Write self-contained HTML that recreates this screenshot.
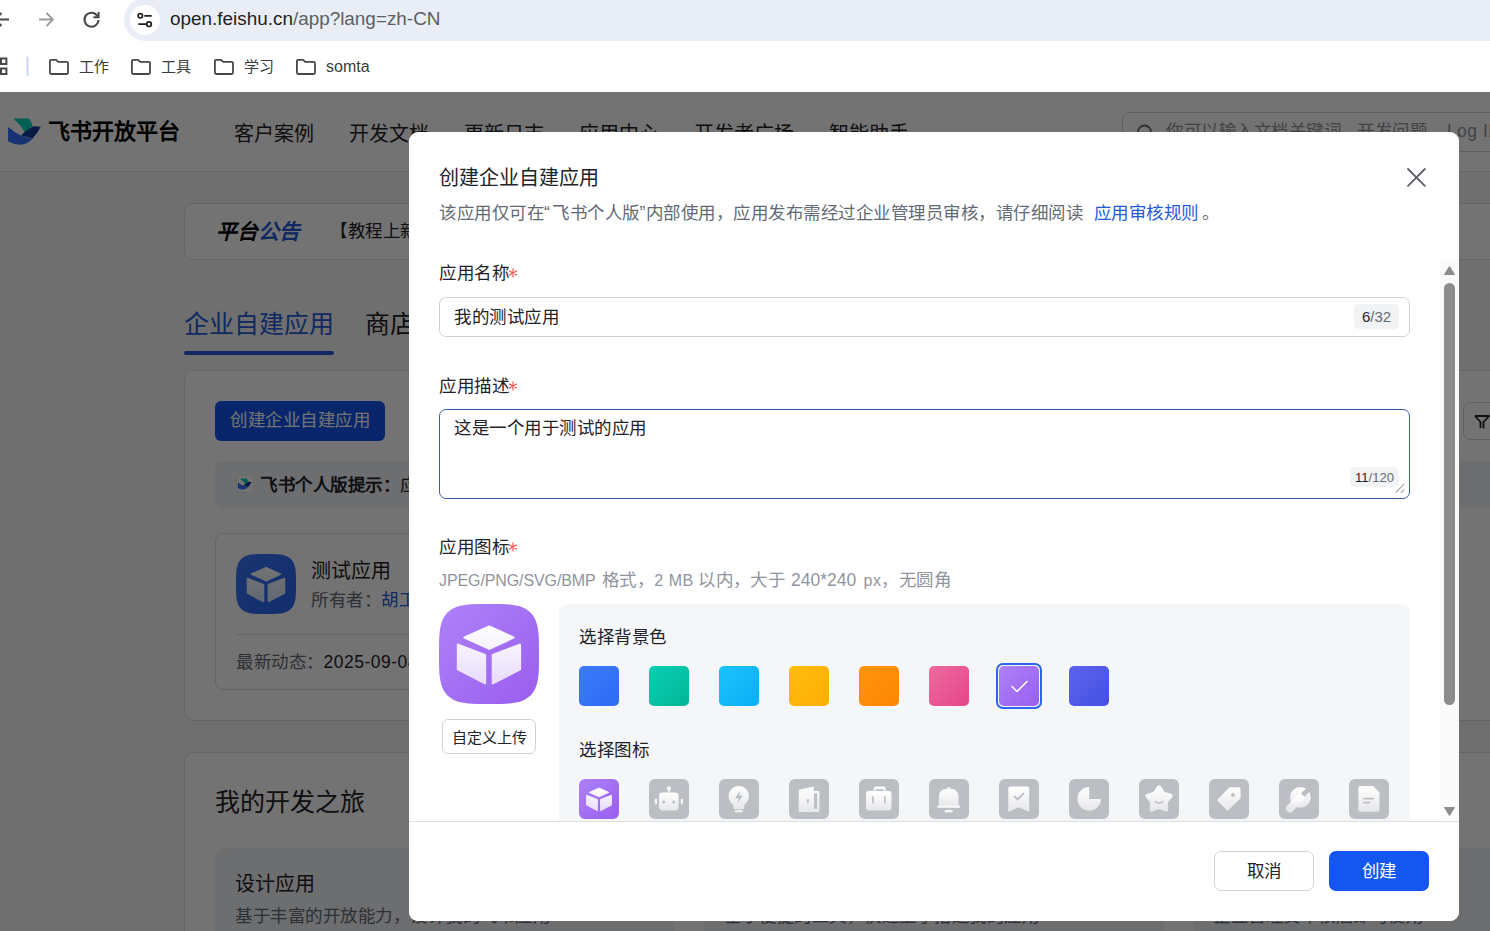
<!DOCTYPE html>
<html lang="zh-CN">
<head>
<meta charset="utf-8">
<style>
*{box-sizing:border-box;margin:0;padding:0}
html,body{width:1490px;height:931px;overflow:hidden;background:#fff}
body{position:relative;font-family:"Liberation Sans",sans-serif;color:#1f2329;font-weight:300}
.a{position:absolute}
.t{position:absolute;white-space:nowrap;line-height:1}
#chrome{position:absolute;left:0;top:0;width:1490px;height:92px;background:#fff}
#pill{position:absolute;left:124px;top:-2px;width:1400px;height:43px;border-radius:21.5px;background:#e9eef6}
#site{position:absolute;left:130px;top:5px;width:30px;height:30px;border-radius:50%;background:#fff}
#page{position:absolute;left:0;top:92px;width:1490px;height:839px;background:#f5f6f7;overflow:hidden}
#nav{position:absolute;left:0;top:0;width:1490px;height:80px;background:#fff;border-bottom:1px solid #dee0e3}
.card{position:absolute;background:#fff;border:1px solid #dee0e3;border-radius:10px}
#mask{position:absolute;left:0;top:92px;width:1490px;height:839px;background:rgba(0,0,0,.55)}
#modal{position:absolute;left:409px;top:132px;width:1050px;height:789px;background:#fff;border-radius:9px;overflow:hidden}
.lbl{font-size:17.5px;letter-spacing:.5px;color:#1f2329}
.f17{font-size:17.5px;letter-spacing:.5px}
.q{letter-spacing:2.2px}
.req{color:#f54a45}
.inp{position:absolute;left:30px;width:971px;border:1px solid #d0d3d6;border-radius:7px;background:#fff}
.cnt{position:absolute;background:#f2f3f5;border-radius:5px;color:#646a73;line-height:1;white-space:nowrap;text-align:center}
.cnt b{font-weight:normal;color:#1f2329}
.sw{position:absolute;top:534px;width:40px;height:40px;border-radius:5px}
.ic{position:absolute;top:647px;width:40px;height:40px;border-radius:6px;background:#bbbfc4}
.ic svg{position:absolute;left:0;top:0}
.btn{position:absolute;top:719px;width:100px;height:40px;border-radius:7px;font-size:17.5px;letter-spacing:.5px;line-height:38px;text-align:center}
</style>
</head>
<body>
<svg width="0" height="0" style="position:absolute"><defs>
<linearGradient id="wg" x1="0" y1="0" x2="0" y2="1"><stop offset="0" stop-color="#fff"/><stop offset="1" stop-color="#e6e7ea"/></linearGradient>
<linearGradient id="wgp" x1="0" y1="0" x2="0" y2="1" gradientUnits="userSpaceOnUse" gradientTransform="scale(100)"><stop offset="0.2" stop-color="#fff"/><stop offset="0.85" stop-color="#e6d9fb"/></linearGradient>
<linearGradient id="wgb" x1="0" y1="0" x2="0" y2="1" gradientUnits="userSpaceOnUse" gradientTransform="scale(100)"><stop offset="0.2" stop-color="#fff"/><stop offset="0.85" stop-color="#d9e5fd"/></linearGradient>
<linearGradient id="pg" x1="0" y1="0" x2="1" y2="1"><stop offset="0" stop-color="#ad82f8"/><stop offset="1" stop-color="#9a5def"/></linearGradient>
<linearGradient id="bg2" x1="0" y1="0" x2="1" y2="1"><stop offset="0" stop-color="#3a78fb"/><stop offset="1" stop-color="#2a64f0"/></linearGradient>
</defs></svg>
<div id="chrome">
  <div id="pill"></div>
  <div id="site"></div>
  <svg class="a" style="left:0;top:0" width="120" height="92" viewBox="0 0 120 92">
    <path d="M9 19.5H-5M1.5 13L-5 19.5L1.5 26" fill="none" stroke="#474747" stroke-width="2"/>
    <path d="M39 19.5H53M46.5 13L53 19.5L46.5 26" fill="none" stroke="#9c9c9c" stroke-width="1.8"/>
    <path d="M97.6 16.2A7 7 0 1 0 98.5 20" fill="none" stroke="#474747" stroke-width="2"/>
    <path d="M98.6 12V17.2H93.4" fill="none" stroke="#474747" stroke-width="2"/>
    <rect x="1" y="58.5" width="5.4" height="5.5" fill="none" stroke="#474747" stroke-width="2"/>
    <rect x="1" y="68.5" width="5.4" height="5.5" fill="none" stroke="#474747" stroke-width="2"/>
    <rect x="26.5" y="56.5" width="2" height="19.5" rx="1" fill="#c9d9f7"/>
  </svg>
  <svg class="a" style="left:130px;top:5px" width="30" height="30" viewBox="0 0 30 30">
    <circle cx="10.3" cy="10.8" r="2.2" fill="none" stroke="#1f1f1f" stroke-width="1.7"/>
    <path d="M14.3 10.8H21.7M8.3 19.2H16.3" stroke="#1f1f1f" stroke-width="1.7"/>
    <circle cx="19" cy="19.2" r="2.3" fill="none" stroke="#1f1f1f" stroke-width="1.7"/>
  </svg>
  <svg class="a" style="left:48px;top:58px" width="22" height="18" viewBox="0 0 22 18"><path d="M1.9 3.2Q1.9 1.8 3.3 1.8H8.2L10.2 3.8H18.6Q20 3.8 20 5.2V14.6Q20 16 18.6 16H3.3Q1.9 16 1.9 14.6Z" fill="none" stroke="#474747" stroke-width="1.8" stroke-linejoin="round"/></svg>
  <svg class="a" style="left:130px;top:58px" width="22" height="18" viewBox="0 0 22 18"><path d="M1.9 3.2Q1.9 1.8 3.3 1.8H8.2L10.2 3.8H18.6Q20 3.8 20 5.2V14.6Q20 16 18.6 16H3.3Q1.9 16 1.9 14.6Z" fill="none" stroke="#474747" stroke-width="1.8" stroke-linejoin="round"/></svg>
  <svg class="a" style="left:213px;top:58px" width="22" height="18" viewBox="0 0 22 18"><path d="M1.9 3.2Q1.9 1.8 3.3 1.8H8.2L10.2 3.8H18.6Q20 3.8 20 5.2V14.6Q20 16 18.6 16H3.3Q1.9 16 1.9 14.6Z" fill="none" stroke="#474747" stroke-width="1.8" stroke-linejoin="round"/></svg>
  <svg class="a" style="left:295px;top:58px" width="22" height="18" viewBox="0 0 22 18"><path d="M1.9 3.2Q1.9 1.8 3.3 1.8H8.2L10.2 3.8H18.6Q20 3.8 20 5.2V14.6Q20 16 18.6 16H3.3Q1.9 16 1.9 14.6Z" fill="none" stroke="#474747" stroke-width="1.8" stroke-linejoin="round"/></svg>
  <div class="t" style="left:170px;top:10px;font-size:18.9px;color:#1f1f1f">open.feishu.cn<span style="color:#5b5e63">/app?lang=zh-CN</span></div>
  <div class="t" style="left:79px;top:59px;font-size:15px;color:#3c3c3c">工作</div>
  <div class="t" style="left:161px;top:59px;font-size:15px;color:#3c3c3c">工具</div>
  <div class="t" style="left:244px;top:59px;font-size:15px;color:#3c3c3c">学习</div>
  <div class="t" style="left:326px;top:58.5px;font-size:16px;color:#3c3c3c">somta</div>
</div>

<div id="page">
  <div id="nav">
    <svg class="a" style="left:0;top:0" width="50" height="80" viewBox="0 92 50 80"><path d="M13.4 118.5L28.9 118.5Q31 121 32.6 125.9L24.8 132Q20 124 13.4 118.5Z" fill="#00d6b9"/><path d="M8.1 127.1Q15 133 21.1 135.7Q27 138 32.6 138.5Q27 145 19.5 144.7Q13 144 8.1 141.4Z" fill="#3370ff"/><path d="M21.1 135.7Q27 129 33.8 126.3Q37 125.8 40.7 127.1Q37 134 32.6 138.5Q27 137 21.1 135.7Z" fill="#133c9a"/></svg>
    <svg class="a" style="left:1130px;top:26px" width="30" height="30" viewBox="0 0 30 30"><circle cx="14.5" cy="14" r="6.5" fill="none" stroke="#646a73" stroke-width="1.8"/><path d="M19.3 18.8L23 22.5" stroke="#646a73" stroke-width="1.8" stroke-linecap="round"/></svg>
    <div class="t" style="left:48px;top:29px;font-size:22px;font-weight:900;color:#000">飞书开放平台</div>
    <div class="t" style="left:234px;top:32px;font-size:20px">客户案例</div>
    <div class="t" style="left:349px;top:32px;font-size:20px">开发文档</div>
    <div class="t" style="left:464px;top:32px;font-size:20px">更新日志</div>
    <div class="t" style="left:579px;top:32px;font-size:20px">应用中心</div>
    <div class="t" style="left:694px;top:32px;font-size:20px">开发者广场</div>
    <div class="t" style="left:829px;top:32px;font-size:20px">智能助手</div>
    <div class="a" style="left:1122px;top:20px;width:420px;height:40px;border:1px solid #d0d3d6;border-radius:8px"></div>
    <div class="t" style="left:1166px;top:31px;font-size:17.5px;letter-spacing:.5px;color:#8f959e">你可以输入文档关键词<span style="letter-spacing:-6.2px">、</span> 开发问题<span style="letter-spacing:-6.2px">、</span> <span style="margin-left:3.5px">Log ID</span></div>
  </div>
  <!-- announcement -->
  <div class="card" style="left:184px;top:111px;width:1400px;height:57px;border-radius:9px"></div>
  <div class="t" style="left:215.5px;top:129px;font-size:21px;font-weight:900;font-style:italic;color:#000">平台<span style="color:#245bdb">公告</span></div>
  <div class="t" style="left:330px;top:131px;font-size:17.5px;letter-spacing:.5px;color:#1f2329">【教程上新】</div>
  <!-- tabs -->
  <div class="t" style="left:184px;top:220px;font-size:25px;color:#245bdb">企业自建应用</div>
  <div class="t" style="left:365px;top:220px;font-size:25px;color:#1f2329">商店应用</div>
  <div class="a" style="left:184px;top:259px;width:150px;height:4px;border-radius:2px;background:#245bdb"></div>
  <!-- big card -->
  <div class="card" style="left:184px;top:278px;width:1400px;height:351px"></div>
  <div class="a" style="left:215px;top:309px;width:170px;height:40px;border-radius:6px;background:#1456f0"></div>
  <div class="t" style="left:230px;top:320px;font-size:17.5px;letter-spacing:.5px;color:#fff">创建企业自建应用</div>
  <div class="a" style="left:1463px;top:310px;width:60px;height:38px;border:1px solid #d0d3d6;border-radius:7px;background:#fff"></div>
  <svg class="a" style="left:1472px;top:320px" width="20" height="20" viewBox="0 0 20 20"><path d="M3 4H17L11.5 10V16.5M8.5 16V10L3 4" fill="none" stroke="#1f2329" stroke-width="1.8" stroke-linejoin="round"/></svg>
  <div class="a" style="left:215px;top:369px;width:1300px;height:47px;border-radius:8px;background:#f2f3f5"></div>
  <div class="a" style="left:236px;top:383px;width:18px;height:18px;border-radius:3px;background:#fff;border:1px solid #e5e6eb"></div>
  <svg class="a" style="left:237px;top:385px" width="16" height="14" viewBox="6 116 38 31"><path d="M13.4 118.5L28.9 118.5Q31 121 32.6 125.9L24.8 132Q20 124 13.4 118.5Z" fill="#00d6b9"/><path d="M8.1 127.1Q15 133 21.1 135.7Q27 138 32.6 138.5Q27 145 19.5 144.7Q13 144 8.1 141.4Z" fill="#3370ff"/><path d="M21.1 135.7Q27 129 33.8 126.3Q37 125.8 40.7 127.1Q37 134 32.6 138.5Q27 137 21.1 135.7Z" fill="#133c9a"/></svg>
  <div class="t" style="left:260px;top:385px;font-size:17.5px;letter-spacing:.5px;font-weight:bold;color:#1f2329">飞书个人版提示：<span style="font-weight:normal">应用</span></div>
  <div class="card" style="left:215px;top:441px;width:460px;height:157px;border-radius:8px"></div>
  <svg class="a" style="left:236px;top:462px" width="60" height="60" viewBox="0 0 100 100"><path d="M100.00 50.00 L99.94 61.45 L99.77 66.63 L99.48 70.67 L99.07 74.08 L98.55 77.07 L97.91 79.75 L97.14 82.17 L96.26 84.38 L95.25 86.39 L94.12 88.23 L92.86 89.92 L91.46 91.46 L89.92 92.86 L88.23 94.12 L86.39 95.25 L84.38 96.26 L82.17 97.14 L79.75 97.91 L77.07 98.55 L74.08 99.07 L70.67 99.48 L66.63 99.77 L61.45 99.94 L50.00 100.00 L38.55 99.94 L33.37 99.77 L29.33 99.48 L25.92 99.07 L22.93 98.55 L20.25 97.91 L17.83 97.14 L15.62 96.26 L13.61 95.25 L11.77 94.12 L10.08 92.86 L8.54 91.46 L7.14 89.92 L5.88 88.23 L4.75 86.39 L3.74 84.38 L2.86 82.17 L2.09 79.75 L1.45 77.07 L0.93 74.08 L0.52 70.67 L0.23 66.63 L0.06 61.45 L0.00 50.00 L0.06 38.55 L0.23 33.37 L0.52 29.33 L0.93 25.92 L1.45 22.93 L2.09 20.25 L2.86 17.83 L3.74 15.62 L4.75 13.61 L5.88 11.77 L7.14 10.08 L8.54 8.54 L10.08 7.14 L11.77 5.88 L13.61 4.75 L15.62 3.74 L17.83 2.86 L20.25 2.09 L22.93 1.45 L25.92 0.93 L29.33 0.52 L33.37 0.23 L38.55 0.06 L50.00 0.00 L61.45 0.06 L66.63 0.23 L70.67 0.52 L74.08 0.93 L77.07 1.45 L79.75 2.09 L82.17 2.86 L84.38 3.74 L86.39 4.75 L88.23 5.88 L89.92 7.14 L91.46 8.54 L92.86 10.08 L94.12 11.77 L95.25 13.61 L96.26 15.62 L97.14 17.83 L97.91 20.25 L98.55 22.93 L99.07 25.92 L99.48 29.33 L99.77 33.37 L99.94 38.55Z" fill="url(#bg2)"/><g fill="url(#wgb)" stroke="url(#wgb)" stroke-width="2.4" stroke-linejoin="round"><path d="M50.3 22.6L74.4 33.5L50.3 44.6L25.6 33.5Z"/><path d="M19 40.8L46 51L46 79.2L19 65.3Z"/><path d="M53.9 51L80.9 40.8L80.9 65.3L53.9 79.2Z"/></g></svg>
  <div class="t" style="left:311px;top:469px;font-size:20px;color:#1f2329">测试应用</div>
  <div class="t" style="left:311px;top:500px;font-size:17.5px;letter-spacing:.5px;color:#646a73">所有者：<span style="color:#245bdb">胡工</span></div>
  <div class="a" style="left:236px;top:542px;width:420px;height:1px;background:#dee0e3"></div>
  <div class="t" style="left:236px;top:562px;font-size:17.5px;letter-spacing:.5px;color:#646a73">最新动态：<span style="color:#1f2329">2025-09-04</span></div>
  <!-- journey -->
  <div class="card" style="left:184px;top:660px;width:1400px;height:400px"></div>
  <div class="t" style="left:215px;top:698px;font-size:25px;color:#1f2329">我的开发之旅</div>
  <div class="a" style="left:215px;top:756px;width:460px;height:200px;border-radius:10px;background:#f2f3f5"></div>
  <div class="a" style="left:704px;top:756px;width:460px;height:200px;border-radius:10px;background:#f2f3f5"></div>
  <div class="a" style="left:1193px;top:756px;width:460px;height:200px;border-radius:10px;background:#f2f3f5"></div>
  <div class="t" style="left:235px;top:782px;font-size:20px;color:#1f2329">设计应用</div>
  <div class="t" style="left:235px;top:816px;font-size:17.5px;letter-spacing:.5px;color:#646a73">基于丰富的开放能力，设计我的飞书应用</div>
  <div class="t" style="left:724px;top:816px;font-size:17.5px;letter-spacing:.5px;color:#646a73">基于便捷的工具，快速上手搭建我的应用</div>
  <div class="t" style="left:1213px;top:816px;font-size:17.5px;letter-spacing:.5px;color:#646a73">企业管理员审核后即可使用</div>
</div>
<div id="mask"></div>

<div id="modal">
  <div class="t" style="left:30px;top:36px;font-size:20px;color:#1f2329">创建企业自建应用</div>
  <svg class="a" style="left:996px;top:34px" width="24" height="24" viewBox="0 0 24 24"><path d="M3 3L19.8 19.8M19.8 3L3 19.8" stroke="#5c6168" stroke-width="1.8" stroke-linecap="round"/></svg>
  <div class="t f17" style="left:30px;top:73px;color:#646a73">该应用仅可在<span class="q">“</span>飞书个人版<span style="letter-spacing:.2px">”</span>内部使用，应用发布需经过企业管理员审核，请仔细阅读</div>
  <div class="t f17" style="left:684.5px;top:73px;color:#245bdb">应用审核规则</div>
  <div class="t f17" style="left:793px;top:73px;color:#646a73">。</div>

  <div class="t lbl" style="left:30px;top:133px">应用名称</div><svg class="a" style="left:99.4px;top:136.4px" width="10" height="10" viewBox="0 0 10 10"><path d="M5.00 0.90L5.00 9.10M8.55 2.95L1.45 7.05M1.45 2.95L8.55 7.05" stroke="#f54a45" stroke-width="1.1" stroke-linecap="round"/></svg>
  <div class="inp" style="top:165px;height:40px"></div>
  <div class="t f17" style="left:45px;top:177px;">我的测试应用</div>
  <div class="cnt" style="left:945px;top:172px;width:45px;height:25px;font-size:15px;padding-top:5px"><b>6</b>/32</div>

  <div class="t lbl" style="left:30px;top:246px">应用描述</div><svg class="a" style="left:99.4px;top:248.9px" width="10" height="10" viewBox="0 0 10 10"><path d="M5.00 0.90L5.00 9.10M8.55 2.95L1.45 7.05M1.45 2.95L8.55 7.05" stroke="#f54a45" stroke-width="1.1" stroke-linecap="round"/></svg>
  <div class="inp" style="top:277px;height:90px;border-color:#3b5ca6"></div>
  <div class="t f17" style="left:45px;top:288px;">这是一个用于测试的应用</div>
  <div class="cnt" style="left:941px;top:335px;width:49px;height:20px;font-size:13px;padding-top:4px"><b>11</b>/120</div>

  <svg class="a" style="left:985px;top:350px" width="12" height="12" viewBox="0 0 12 12"><path d="M2.1 10.5L9.9 2.2M7.2 10.5L9.9 8.0" stroke="#a8abb0" stroke-width="1.1" stroke-linecap="round"/></svg>
  <div class="t lbl" style="left:30px;top:407px">应用图标</div><svg class="a" style="left:99.4px;top:410.4px" width="10" height="10" viewBox="0 0 10 10"><path d="M5.00 0.90L5.00 9.10M8.55 2.95L1.45 7.05M1.45 2.95L8.55 7.05" stroke="#f54a45" stroke-width="1.1" stroke-linecap="round"/></svg>
  <div class="t f17" style="left:30px;top:441.2px;color:#8f959e;font-size:16px;letter-spacing:-.1px">JPEG/PNG/SVG/BMP</div>
  <div class="t f17" style="left:192.5px;top:440px;color:#8f959e;">格式，</div>
  <div class="t f17" style="left:245.29999999999995px;top:441.2px;color:#8f959e;font-size:16px">2 MB</div>
  <div class="t f17" style="left:289.20000000000005px;top:440px;color:#8f959e;">以内，</div>
  <div class="t f17" style="left:341px;top:440px;color:#8f959e;">大于</div>
  <div class="t f17" style="left:382px;top:440.3px;color:#8f959e;font-size:17.5px;letter-spacing:0">240*240</div>
  <div class="t f17" style="left:454.5px;top:441.2px;color:#8f959e;font-size:16px">px</div>
  <div class="t f17" style="left:472px;top:440px;color:#8f959e;">，无圆角</div>
  

  <svg class="a" style="left:30px;top:472px" width="100" height="100" viewBox="0 0 100 100"><path d="M100.00 50.00 L99.94 61.45 L99.77 66.63 L99.48 70.67 L99.07 74.08 L98.55 77.07 L97.91 79.75 L97.14 82.17 L96.26 84.38 L95.25 86.39 L94.12 88.23 L92.86 89.92 L91.46 91.46 L89.92 92.86 L88.23 94.12 L86.39 95.25 L84.38 96.26 L82.17 97.14 L79.75 97.91 L77.07 98.55 L74.08 99.07 L70.67 99.48 L66.63 99.77 L61.45 99.94 L50.00 100.00 L38.55 99.94 L33.37 99.77 L29.33 99.48 L25.92 99.07 L22.93 98.55 L20.25 97.91 L17.83 97.14 L15.62 96.26 L13.61 95.25 L11.77 94.12 L10.08 92.86 L8.54 91.46 L7.14 89.92 L5.88 88.23 L4.75 86.39 L3.74 84.38 L2.86 82.17 L2.09 79.75 L1.45 77.07 L0.93 74.08 L0.52 70.67 L0.23 66.63 L0.06 61.45 L0.00 50.00 L0.06 38.55 L0.23 33.37 L0.52 29.33 L0.93 25.92 L1.45 22.93 L2.09 20.25 L2.86 17.83 L3.74 15.62 L4.75 13.61 L5.88 11.77 L7.14 10.08 L8.54 8.54 L10.08 7.14 L11.77 5.88 L13.61 4.75 L15.62 3.74 L17.83 2.86 L20.25 2.09 L22.93 1.45 L25.92 0.93 L29.33 0.52 L33.37 0.23 L38.55 0.06 L50.00 0.00 L61.45 0.06 L66.63 0.23 L70.67 0.52 L74.08 0.93 L77.07 1.45 L79.75 2.09 L82.17 2.86 L84.38 3.74 L86.39 4.75 L88.23 5.88 L89.92 7.14 L91.46 8.54 L92.86 10.08 L94.12 11.77 L95.25 13.61 L96.26 15.62 L97.14 17.83 L97.91 20.25 L98.55 22.93 L99.07 25.92 L99.48 29.33 L99.77 33.37 L99.94 38.55Z" fill="url(#pg)"/><g fill="url(#wgp)" stroke="url(#wgp)" stroke-width="2.4" stroke-linejoin="round"><path d="M50.3 22.6L74.4 33.5L50.3 44.6L25.6 33.5Z"/><path d="M19 40.8L46 51L46 79.2L19 65.3Z"/><path d="M53.9 51L80.9 40.8L80.9 65.3L53.9 79.2Z"/></g></svg>
  <div class="a" style="left:33px;top:587px;width:94px;height:35px;border:1px solid #d0d3d6;border-radius:6px"></div>
  <div class="t" style="left:43px;top:598px;font-size:15px">自定义上传</div>

  <div class="a" style="left:150px;top:472px;width:851px;height:400px;border-radius:8px;background:#f5f6f7"></div>
  <div class="t lbl" style="left:170px;top:497px">选择背景色</div>
  <div class="sw" style="left:170px;background:linear-gradient(135deg,#3b7bfb,#2f6bf4)"></div>
  <div class="sw" style="left:240px;background:linear-gradient(135deg,#08d0b4,#02b597)"></div>
  <div class="sw" style="left:310px;background:linear-gradient(135deg,#1bc3fb,#09aef5)"></div>
  <div class="sw" style="left:380px;background:linear-gradient(135deg,#ffbd0d,#ffad05)"></div>
  <div class="sw" style="left:450px;background:linear-gradient(135deg,#ff9510,#ff8500)"></div>
  <div class="sw" style="left:520px;background:linear-gradient(135deg,#ee6a9e,#e5468a)"></div>
  <div class="a" style="left:587px;top:531px;width:46px;height:46px;border:2px solid #2c66f0;border-radius:7px"></div>
  <div class="sw" style="left:590px;background:linear-gradient(135deg,#ad82f8,#9a5ef0)"></div>
  <svg class="a" style="left:590px;top:534px" width="40" height="40" viewBox="0 0 40 40"><path d="M13 20.5L18 25.5L28 15.5" fill="none" stroke="#fff" stroke-width="1.6" stroke-linecap="round" stroke-linejoin="round"/></svg>
  <div class="sw" style="left:660px;background:linear-gradient(135deg,#5a64ee,#4650e2)"></div>
  <div class="t lbl" style="left:170px;top:610px">选择图标</div>
  <div class="ic" style="left:170px;background:none"><svg width="40" height="40" viewBox="0 0 40 40"><rect width="40" height="40" rx="6" fill="url(#pg)"/><g transform="scale(.4)" fill="url(#wgp)" stroke="url(#wgp)" stroke-width="2.4" stroke-linejoin="round"><path d="M50.3 22.6L74.4 33.5L50.3 44.6L25.6 33.5Z"/><path d="M19 40.8L46 51L46 79.2L19 65.3Z"/><path d="M53.9 51L80.9 40.8L80.9 65.3L53.9 79.2Z"/></g></svg></div>
  <div class="ic" style="left:240px"><svg width="40" height="40" viewBox="0 0 40 40"><g fill="url(#wg)"><circle cx="19.8" cy="9.6" r="2.2"/><rect x="19" y="10" width="1.6" height="4.5"/><rect x="10" y="13.6" width="19.6" height="18" rx="3.5"/><rect x="5.8" y="19.8" width="2.2" height="6" rx="1"/><rect x="31.8" y="19.8" width="2.2" height="6" rx="1"/></g><circle cx="14.8" cy="23" r="1.4" fill="#bbbfc4"/><circle cx="24.6" cy="23" r="1.4" fill="#bbbfc4"/></svg></div>
  <div class="ic" style="left:310px"><svg width="40" height="40" viewBox="0 0 40 40"><g fill="url(#wg)"><path d="M19.8 7C25.5 7 30 11.5 30 17.2C30 21 28 23.6 25.6 25.4L25 29.3Q24.8 30.2 23.9 30.2L15.7 30.2Q14.8 30.2 14.6 29.3L14 25.4C11.6 23.6 9.6 21 9.6 17.2C9.6 11.5 14.1 7 19.8 7Z"/><rect x="15.8" y="31.2" width="8" height="2.2" rx="1"/></g><path d="M21.6 11.2L16 19.3L19.6 19.3L18.2 24.6L23.8 16.4L20.2 16.4Z" fill="#bbbfc4"/></svg></div>
  <div class="ic" style="left:380px"><svg width="40" height="40" viewBox="0 0 40 40"><g fill="url(#wg)"><path d="M9.7 11.6Q9.7 10.6 10.7 10.4L24.8 7.5L24.8 12.1L29.2 12.1Q30.4 12.1 30.4 13.3L30.4 31.8Q30.4 33 29.2 33L10.9 33Q9.7 33 9.7 31.8Z"/></g><rect x="25.1" y="14.3" width="3" height="15.5" fill="#bbbfc4"/><rect x="18" y="19.9" width="1.9" height="4.3" rx=".9" fill="#bbbfc4"/></svg></div>
  <div class="ic" style="left:450px"><svg width="40" height="40" viewBox="0 0 40 40"><g fill="url(#wg)"><path d="M14.6 13V10Q14.6 7.6 17 7.6H24.4Q26.8 7.6 26.8 10V13H24.6V10.2H16.8V13Z"/><rect x="7" y="12" width="25.5" height="19.5" rx="3"/></g><rect x="13" y="17.3" width="1.7" height="7.2" rx=".8" fill="#bbbfc4"/><rect x="25" y="17.3" width="1.7" height="7.2" rx=".8" fill="#bbbfc4"/></svg></div>
  <div class="ic" style="left:520px"><svg width="40" height="40" viewBox="0 0 40 40"><g fill="url(#wg)"><path d="M9.8 28L9.8 18Q9.8 9.6 19.7 9.6Q29.6 9.6 29.6 18L29.6 28Z"/><circle cx="19.7" cy="9.3" r="1.6"/><rect x="8" y="26.8" width="23.4" height="2.2" rx="1.1"/><rect x="15.6" y="31" width="8.2" height="2.5" rx="1.25"/></g></svg></div>
  <div class="ic" style="left:590px"><svg width="40" height="40" viewBox="0 0 40 40"><path d="M9.3 9.6Q9.3 7.6 11.3 7.6L28.2 7.6Q30.2 7.6 30.2 9.6L30.2 32.9L19.75 28.2L9.3 32.9Z" fill="url(#wg)"/><path d="M15.6 17.4L18.6 20.4L24.4 14.6" fill="none" stroke="#bbbfc4" stroke-width="1.9" stroke-linecap="round" stroke-linejoin="round"/></svg></div>
  <div class="ic" style="left:660px"><svg width="40" height="40" viewBox="0 0 40 40"><path d="M20.2 20L20.2 8.1A11.8 11.8 0 1 0 32 20Z" fill="url(#wg)"/></svg></div>
  <div class="ic" style="left:730px"><svg width="40" height="40" viewBox="0 0 40 40"><path d="M20.00 8.40L24.23 14.78L31.60 16.83L26.85 22.82L27.17 30.47L20.00 27.80L12.83 30.47L13.15 22.82L8.40 16.83L15.77 14.78Z" fill="url(#wg)" stroke="url(#wg)" stroke-width="4.2" stroke-linejoin="round"/><path d="M16.4 22.6Q20 25.4 23.6 22.6" fill="none" stroke="#bbbfc4" stroke-width="1.5" stroke-linecap="round"/></svg></div>
  <div class="ic" style="left:800px"><svg width="40" height="40" viewBox="0 0 40 40"><path d="M21.5 8.2L29.6 8.2Q31.6 8.2 31.6 10.2L31.6 18.3Q31.6 19.1 31 19.7L19.4 31.3Q18.6 32.1 17.8 31.3L8.5 22Q7.7 21.2 8.5 20.4L20.1 8.8Q20.7 8.2 21.5 8.2Z" fill="url(#wg)"/><circle cx="23.9" cy="15.9" r="1.9" fill="#bbbfc4"/></svg></div>
  <div class="ic" style="left:870px"><svg width="40" height="40" viewBox="0 0 40 40"><g fill="url(#wg)"><circle cx="21.4" cy="18.4" r="10.4"/><path d="M21 19L11 29.4" stroke="url(#wg)" stroke-width="8" stroke-linecap="round"/></g><rect x="3.2" y="-2.4" width="12" height="4.8" rx="1" transform="translate(21.4 18.4) rotate(-45)" fill="#bbbfc4"/></svg></div>
  <div class="ic" style="left:940px"><svg width="40" height="40" viewBox="0 0 40 40"><path d="M9.4 9.1Q9.4 7.1 11.4 7.1L24.2 7.1L30.4 13.3L30.4 30.8Q30.4 32.8 28.4 32.8L11.4 32.8Q9.4 32.8 9.4 30.8Z" fill="url(#wg)"/><rect x="14" y="18.8" width="11" height="1.7" rx=".8" fill="#bbbfc4"/><rect x="14" y="22.8" width="7" height="1.7" rx=".8" fill="#bbbfc4"/></svg></div>

  <div id="footer" class="a" style="left:0;top:689px;width:1050px;height:100px;background:#fff;border-top:1px solid #dee0e3">
    <div class="btn" style="left:805px;top:29px;border:1px solid #d0d3d6;color:#1f2329">取消</div>
    <div class="btn" style="left:920px;top:29px;background:#1456f0;color:#fff;line-height:40px">创建</div>
  </div>
  <!-- scrollbar -->
  <div class="a" style="left:1031px;top:128px;width:19px;height:561px;background:#fafafa"></div>
  <div class="a" style="left:1035px;top:151px;width:11px;height:422px;border-radius:5.5px;background:#8c8c8c"></div>
  <svg class="a" style="left:1031px;top:128px" width="19" height="561" viewBox="0 0 19 561"><path d="M9.5 6.5L14.5 14.5H4.5Z" fill="#8c8c8c" stroke="#8c8c8c" stroke-width="1" stroke-linejoin="round"/><path d="M4.5 547.5H14.5L9.5 555.5Z" fill="#8c8c8c" stroke="#8c8c8c" stroke-width="1" stroke-linejoin="round"/></svg>
</div>
</body>
</html>
